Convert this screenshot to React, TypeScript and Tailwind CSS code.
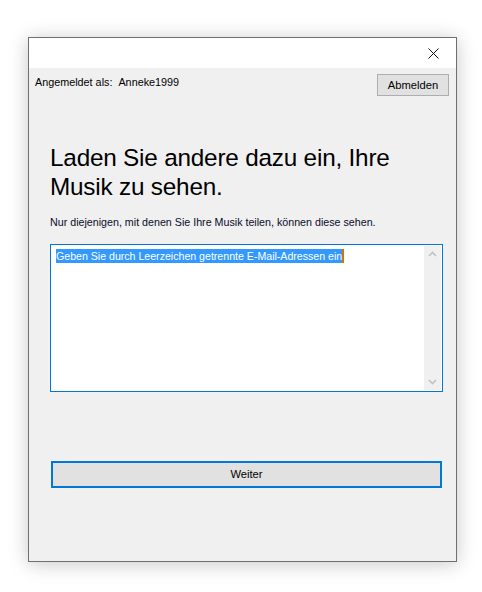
export default function App() {
  return (
    <div className="min-h-[592px] w-[482px] bg-white pl-[28px] pt-[37px] font-['Liberation_Sans',Arial,sans-serif]">
      <div className="flex h-[525px] w-[429px] flex-col border border-[#6f6f6f] bg-[#f0f0f0] shadow-[0_2px_18px_rgba(0,0,0,0.22)]">
        <div className="flex h-[30px] shrink-0 items-center justify-end bg-white">
          <div className="flex h-[30px] w-[46px] items-center justify-center">
            <svg width="11" height="11" viewBox="0 0 11 11" fill="none" stroke="#111" strokeWidth="1">
              <path d="M0.5 0.5 L10.5 10.5 M10.5 0.5 L0.5 10.5" />
            </svg>
          </div>
        </div>

        <div className="flex flex-1 flex-col">
          <div className="mt-[6px] flex items-start justify-between pl-[6px] pr-[7px]">
            <p className="pt-[1px] text-[10.8px] leading-[14px] text-black">
              Angemeldet als:&nbsp;&nbsp;Anneke1999
            </p>
            <button className="h-[22px] w-[72px] border border-[#adadad] bg-[#e1e1e1] text-[11.2px] text-black">
              Abmelden
            </button>
          </div>

          <div className="px-[21px]">
            <h1 className="mt-[47px] text-[24.3px] leading-[29px] tracking-[-0.2px] text-black">
              Laden Sie andere dazu ein, Ihre Musik zu sehen.
            </h1>
            <p className="mt-[14px] text-[10.7px] leading-[14px] text-[#0a0a28]">
              Nur diejenigen, mit denen Sie Ihre Musik teilen, können diese sehen.
            </p>

            <div className="mt-[15px] flex h-[148px] w-[393px] border border-[#0078d7] bg-white">
              <div className="flex-1 pl-[5px] pt-[4px] text-[10.6px] leading-[14px]">
                <span className="border-r-2 border-[#e06c00] bg-[#3399ff] py-[1px] text-white">
                  Geben Sie durch Leerzeichen getrennte E-Mail-Adressen ein
                </span>
              </div>
              <div className="my-[1px] mr-[1px] flex w-[17px] flex-col items-center justify-between bg-[#f0f0f0] py-[5px]">
                <svg width="9" height="6" viewBox="0 0 9 6" fill="none" stroke="#c2c2c2" strokeWidth="1.6">
                  <path d="M1 5 L4.5 1.5 L8 5" />
                </svg>
                <svg width="9" height="6" viewBox="0 0 9 6" fill="none" stroke="#c2c2c2" strokeWidth="1.6">
                  <path d="M1 1 L4.5 4.5 L8 1" />
                </svg>
              </div>
            </div>

            <button className="ml-[1px] mt-[69px] h-[27px] w-[391px] border-2 border-[#0078d7] bg-[#e1e1e1] text-[11.2px] text-black">
              Weiter
            </button>
          </div>
        </div>
      </div>
    </div>
  );
}
